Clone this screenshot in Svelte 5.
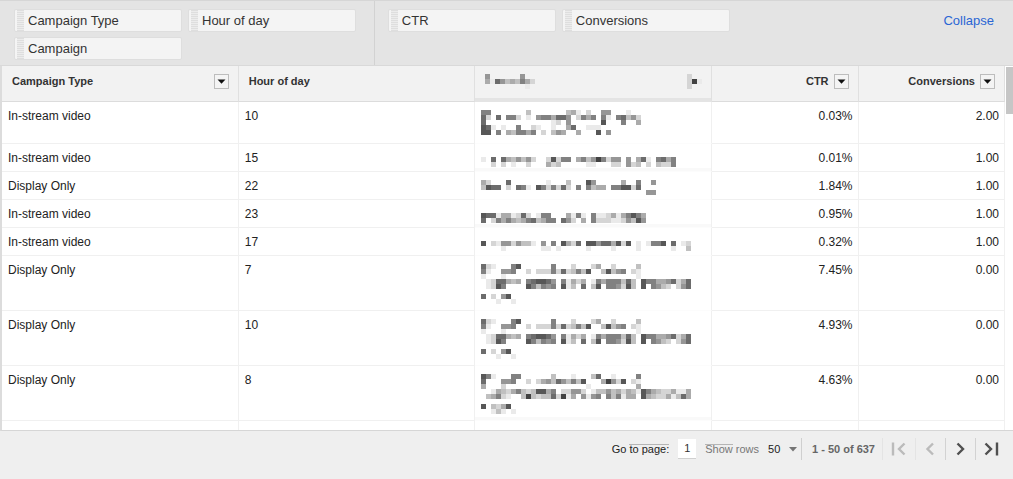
<script lang="ts">
  type Row = {
    type: string;
    hour: string;
    mask: string[];
    ctr: string;
    conversions: string;
    lines: number;
    band?: boolean;
  };

  const dimensions = ['Campaign Type', 'Hour of day', 'Campaign'];
  const metrics = ['CTR', 'Conversions'];

  // one character per 5px cell, a higher digit is a darker cell
  const CELL = 5;

  const headMask = ['5......5', '4175343642', '........1'];
  const buttonMask = ['2', '291', '2'];

  const longMask = [
    '721...68......6...2...24..2....3',
    '61..556..2.22262723638..38356.21',
    '1...1..........................1',
    '.1277434.678875.61424.164666373.8664457247',
    '.1286....863656.813.7.38.665283.8.6532.257',
    '',
    '7.2.58',
    '...1..1'
  ];

  const rows: Row[] = [
    {
      type: 'In-stream video', hour: '10', ctr: '0.03%', conversions: '2.00', lines: 2,
      mask: [
        '66.......3.......341.2..55...1',
        '72.7.662.1.5664775.2646.61.67352',
        '7.............12.5......8...6..4',
        '871.1..6..21..1..47..111',
        '88.6.436646.2.354..4...8.5'
      ]
    },
    {
      type: 'In-stream video', hour: '15', ctr: '0.01%', conversions: '1.00', lines: 1, band: true,
      mask: [
        '',
        '1.7.7435352..28266.463596255.5.471.6746',
        '..2.2.1..2...423.....11...22.523.2.3226'
      ]
    },
    {
      type: 'Display Only', hour: '22', ctr: '1.84%', conversions: '1.00', lines: 1,
      mask: [
        '42...7.......1...3...85.....4..6..5',
        '3877.2.761.8626272.6.6344.668827',
        '.................................55'
      ]
    },
    {
      type: 'In-stream video', hour: '23', ctr: '0.95%', conversions: '1.00', lines: 1, band: true,
      mask: [
        '',
        '8771441272.166...4161.61124146864',
        '7.2646434673466.752.4.62221125385'
      ]
    },
    {
      type: 'In-stream video', hour: '17', ctr: '0.32%', conversions: '1.00', lines: 1,
      mask: [
        '',
        '8.215525331.5.6.8427.885774828.1.1668.7.12',
        '....1.......11.1.....1....1....1......1..3'
      ]
    },
    { type: 'Display Only', hour: '7', ctr: '7.45%', conversions: '0.00', lines: 3, mask: longMask },
    { type: 'Display Only', hour: '10', ctr: '4.93%', conversions: '0.00', lines: 3, mask: longMask },
    {
      type: 'Display Only', hour: '8', ctr: '4.63%', conversions: '0.00', lines: 3, band: true,
      mask: [
        '861...66......3...1...37..1....6',
        '7...556..2.2453753638...49528.21',
        '4...2................1.........4',
        '..1432463238846.22552.13353424318643224114',
        '.34621..39323372914.5156.636144.8432241374',
        '',
        '8.3248',
        '..131.1'
      ]
    },
    { type: '', hour: '', ctr: '', conversions: '', lines: 1, mask: [] }
  ];

  let page = $state('1');
  let pageSize = $state('50');

  function cells(mask: string[]) {
    return mask.flatMap((line, y) =>
      [...line].flatMap((c, x) => (c === '.' ? [] : [{ x, y, shade: 255 - Number(c) * 21 }]))
    );
  }
</script>

{#snippet mosaic(mask: string[])}
  {@const width = Math.max(1, ...mask.map((line) => line.length)) * CELL}
  {@const height = mask.length * CELL}
  <svg class="mosaic" {width} {height} viewBox="0 0 {width} {height}" aria-hidden="true">
    {#each cells(mask) as cell}
      <rect
        x={cell.x * CELL}
        y={cell.y * CELL}
        width={CELL}
        height={CELL}
        fill="rgb({cell.shade},{cell.shade},{cell.shade})"
      />
    {/each}
  </svg>
{/snippet}

{#snippet menuButton(label: string)}
  <button class="menu" aria-label="{label} options">
    <svg width="9" height="5" viewBox="0 0 9 5"><path d="M0.5 0.5h8L4.5 4.8z" fill="#111" /></svg>
  </button>
{/snippet}

<div class="report">
  <header class="fields">
    <div class="group dimensions">
      {#each dimensions as name}
        <div class="chip"><span class="grip"></span>{name}</div>
      {/each}
    </div>
    <div class="group">
      {#each metrics as name}
        <div class="chip"><span class="grip"></span>{name}</div>
      {/each}
    </div>
    <a class="collapse" href="#collapse">Collapse</a>
  </header>

  <div class="grid">
    <table>
      <thead>
        <tr>
          <th class="wide">
            <div class="head">Campaign Type {@render menuButton('Campaign Type')}</div>
          </th>
          <th class="wide"><div class="head">Hour of day</div></th>
          <th class="wide hidden-col">
            <div class="head">{@render mosaic(headMask)}{@render mosaic(buttonMask)}</div>
          </th>
          <th class="narrow"><div class="head num">CTR {@render menuButton('CTR')}</div></th>
          <th class="narrow"><div class="head num">Conversions {@render menuButton('Conversions')}</div></th>
        </tr>
      </thead>
      <tbody>
        {#each rows as row}
          <tr class="lines-{row.lines}" class:band={row.band}>
            <td>{row.type}</td>
            <td>{row.hour}</td>
            <td class="hidden-col">{@render mosaic(row.mask)}</td>
            <td class="num">{row.ctr}</td>
            <td class="num">{row.conversions}</td>
          </tr>
        {/each}
      </tbody>
    </table>
    <div class="scrollbar"><div class="thumb"></div></div>
  </div>

  <footer>
    <label for="page">Go <span class="ruled">to page:</span></label>
    <input id="page" type="text" bind:value={page} />
    <label class="size" for="size"><span class="ruled">Show</span> rows</label>
    <div class="select">
      <select id="size" bind:value={pageSize}>
        <option>50</option>
        <option>100</option>
      </select>
      <svg width="8" height="5" viewBox="0 0 8 5"><path d="M0 0h8L4 4.6z" fill="#757575" /></svg>
    </div>
    <span class="range">1 - 50 of 637</span>
    <nav>
      <button disabled aria-label="First page">
        <svg width="16" height="14" viewBox="0 0 16 14"><path d="M2 0.5v13M13.5 1.5L8 7l5.5 5.5" /></svg>
      </button>
      <button disabled aria-label="Previous page">
        <svg width="16" height="14" viewBox="0 0 16 14"><path d="M10 1.5L4.5 7l5.5 5.5" /></svg>
      </button>
      <button aria-label="Next page">
        <svg width="16" height="14" viewBox="0 0 16 14"><path d="M4.5 1.5L10 7l-5.5 5.5" /></svg>
      </button>
      <button aria-label="Last page">
        <svg width="16" height="14" viewBox="0 0 16 14"><path d="M2.5 1.5L8 7l-5.5 5.5M14 0.5v13" /></svg>
      </button>
    </nav>
  </footer>
</div>

<style>
  :global(body) {
    margin: 0;
    font-family: "Liberation Sans", Arial, sans-serif;
    font-size: 12px;
    color: #222;
  }

  .report {
    box-sizing: border-box;
    height: 100vh;
    display: flex;
    flex-direction: column;
    background: #efefef;
  }

  button,
  input,
  select {
    font: inherit;
    padding: 0;
    margin: 0;
  }

  .fields {
    display: flex;
    background: #e4e4e4;
    border-top: 1px solid #d6d6d6;
    border-bottom: 1px solid #d9d9d9;
    font-size: 13px;
    color: #333;
  }

  .group {
    display: flex;
    flex-wrap: wrap;
    align-content: flex-start;
    gap: 5px 6px;
    flex: 1;
    padding: 8px 13px 5px;
  }

  .dimensions {
    box-sizing: border-box;
    flex: 0 0 37%;
    padding-left: 14px;
    border-right: 1px solid #d2d2d2;
  }

  .chip {
    box-sizing: border-box;
    display: flex;
    align-items: center;
    width: 168px;
    height: 23px;
    padding-left: 2px;
    background: #f4f4f4;
    border: 1px solid #dedede;
    border-radius: 2px;
  }

  .grip {
    align-self: stretch;
    width: 7px;
    margin-right: 4px;
    background: repeating-linear-gradient(#dedede 0 1px, #ececec 1px 2px);
  }

  .collapse {
    padding: 12px 19px;
    line-height: 15px;
    color: #2a66d4;
    text-decoration: none;
  }

  .grid {
    flex: 1;
    min-height: 0;
    display: flex;
    overflow: hidden;
    background: #fff;
    border-left: 2px solid #dcdcdc;
    border-bottom: 1px solid #d6d6d6;
  }

  table {
    flex: 1;
    align-self: flex-start;
    table-layout: fixed;
    border-collapse: separate;
    border-spacing: 0;
  }

  th,
  td {
    box-sizing: border-box;
    text-align: left;
    vertical-align: top;
    border-right: 1px solid #f0f0f0;
    border-bottom: 1px solid #f0f0f0;
  }

  th {
    height: 36px;
    padding: 8px 9px 0 10px;
    background: #f2f2f2;
    border-right-color: #e0e0e0;
    border-bottom-color: #dcdcdc;
    font-size: 11px;
    color: #333;
  }

  .wide {
    width: 23.6%;
  }

  .narrow {
    width: 14.6%;
  }

  .head {
    display: flex;
    justify-content: space-between;
    line-height: 14px;
  }

  .head.num {
    justify-content: flex-end;
    gap: 5px;
  }

  .menu {
    box-sizing: border-box;
    display: flex;
    align-items: center;
    justify-content: center;
    width: 15px;
    height: 15px;
    background: #f4f4f4;
    border: 1px solid #bdbdbd;
  }

  td {
    padding: 7px 5px 0 6px;
    line-height: 14px;
  }

  .lines-1 td {
    height: 28px;
  }

  .lines-2 td {
    height: 42px;
  }

  .lines-3 td {
    height: 55px;
  }

  .num {
    text-align: right;
  }

  .hidden-col {
    border-bottom-color: #fcfcfc;
  }

  td.hidden-col {
    padding-top: 8px;
  }

  th.hidden-col {
    border-bottom: 4px solid #e4e4e4;
  }

  .band .hidden-col {
    box-shadow: inset 0 -3px #f9f9f9;
  }

  .mosaic {
    display: block;
    shape-rendering: crispEdges;
  }

  .scrollbar {
    width: 8px;
    background: #fff;
  }

  .thumb {
    width: 7px;
    height: 47px;
    margin: 1px 0 0 auto;
    background: #c6c6c6;
  }

  footer {
    display: flex;
    align-items: center;
    justify-content: flex-end;
    height: 35px;
    padding: 0 8px 13px 0;
    font-size: 11px;
  }

  .ruled {
    background: linear-gradient(#b5b5b5, #b5b5b5) 0 1px / 100% 1px no-repeat;
  }

  .size {
    color: #777;
  }

  #page {
    width: 18px;
    height: 20px;
    box-sizing: border-box;
    margin: 0 9px;
    border: 0;
    border-bottom: 1px solid #d0d0d0;
    background: #fff;
    color: #333;
    text-align: center;
  }

  .select {
    position: relative;
    margin-left: 9px;
    padding-right: 4px;
    border-right: 1px solid #cfcfcf;
  }

  .select select {
    display: block;
    width: 29px;
    height: 22px;
    border: 0;
    background: transparent;
    appearance: none;
    color: #222;
  }

  .select svg {
    position: absolute;
    right: 4px;
    top: 9px;
    pointer-events: none;
  }

  .range {
    padding: 0 7px 0 10px;
    font-weight: bold;
    color: #666;
  }

  nav {
    display: flex;
  }

  nav button {
    display: flex;
    align-items: center;
    justify-content: center;
    width: 30px;
    height: 22px;
    background: none;
    border: 0;
    border-left: 1px solid #d2d2d2;
  }

  nav button:first-child {
    width: 33px;
  }

  nav button:disabled {
    border-left-color: #e4e4e4;
  }

  nav path {
    fill: none;
    stroke: #505050;
    stroke-width: 2.4;
  }

  nav button:disabled path {
    stroke: #bbb;
  }
</style>
